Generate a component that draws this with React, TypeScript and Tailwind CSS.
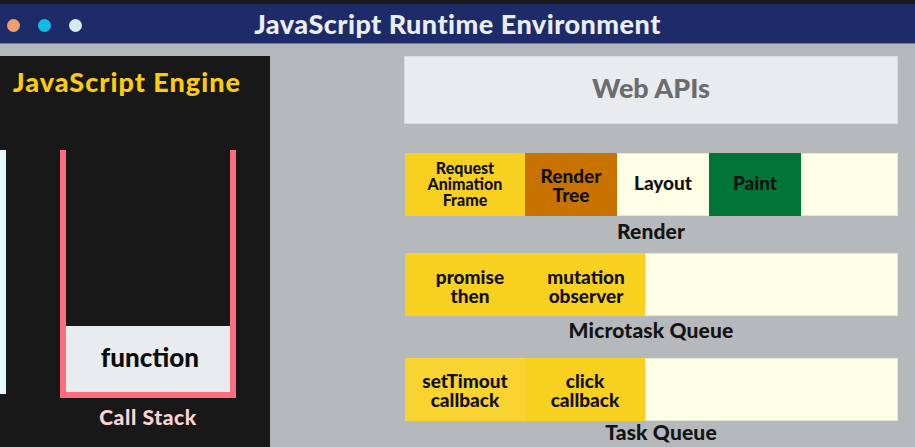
import React from 'react';

const font = "font-['Lato',sans-serif]";

const Cell = ({ lines, className, text = 'text-[19px] leading-[19px]' }: { lines: string[]; className: string; text?: string }) => (
  <div className={`flex flex-col items-center justify-center font-black text-[#111] ${text} ${className}`}>
    {lines.map((l) => (
      <span key={l}>{l}</span>
    ))}
  </div>
);

const Queue = ({ title, children, titleClass }: { title: string; children: React.ReactNode; titleClass: string }) => (
  <div className="flex flex-col">
    <div className="flex h-[63px] pl-[1px]">
      {children}
      <div className="flex-1 bg-[#ffffe6] border border-[#e4e6d6]" />
    </div>
    <div className={`text-center font-black text-[21px] tracking-[0.15px] leading-[24px] text-[#141414] ${titleClass}`}>{title}</div>
  </div>
);

export default function App() {
  return (
    <div className={`w-[915px] h-[447px] overflow-hidden bg-[#b6b9bc] ${font}`}>
      <div className="h-[4px] bg-[#1a1a1c]" />
      <header className="relative flex items-center justify-center h-[40px] bg-[#1e2b69] border-b border-[#6f7aa6]">
        <div className="absolute left-[7px] top-[15px] flex gap-[18px]">
          <span className="w-[13px] h-[13px] rounded-full bg-[#ee9f6d]" />
          <span className="w-[13px] h-[13px] rounded-full bg-[#14bce4]" />
          <span className="w-[13px] h-[13px] rounded-full bg-[#d6e9ec]" />
        </div>
        <h1 className="font-black text-[27px] leading-none text-[#eaeef2] tracking-[0.47px]">JavaScript Runtime Environment</h1>
      </header>

      <div className="flex items-start pt-[12px]">
        <aside className="w-[270px] h-[391px] shrink-0 bg-[#181818] flex flex-col">
          <div className="pl-[13px] pt-[10px] h-[94px] font-black text-[27px] leading-[32px] text-[#fbcd0c] tracking-[1px]">
            JavaScript Engine
          </div>
          <div className="flex items-start">
            <div className="w-[6px] h-[244px] bg-[#e3fbf8]" />
            <div className="ml-[54px] flex flex-col items-center">
              <div className="w-[176px] h-[248px] border-[6px] border-t-0 border-[#fc6d7e] flex flex-col justify-end">
                <div className="h-[66px] bg-[#e9ecee] flex items-center justify-center pl-[4px] pb-[4px] font-black text-[26px] text-[#0c0c0c]">
                  function
                </div>
              </div>
              <div className="mt-[7px] font-black text-[21px] tracking-[0.6px] leading-[24px] text-[#fbd3d6]">Call Stack</div>
            </div>
          </div>
        </aside>

        <main className="ml-[134px] w-[494px] flex flex-col">
          <div className="h-[68px] pb-[4px] bg-[#e9ecee] border border-[#d9dcde] flex items-center justify-center font-black text-[27px] text-[#6a6c6e]">
            Web APIs
          </div>

          <div className="mt-[29px]">
            <Queue title="Render" titleClass="mt-[3px]">
              <Cell lines={['Request', 'Animation', 'Frame']} className="w-[120px] pb-[1px] bg-[#f8d120]" text="text-[16px] leading-[16px]" />
              <Cell lines={['Render', 'Tree']} className="w-[92px] pt-[1px] bg-[#c87200]" />
              <Cell lines={['Layout']} className="w-[92px] pb-[4px] bg-[#ffffe6] border-y border-[#e4e6d6]" />
              <Cell lines={['Paint']} className="w-[92px] pb-[5px] bg-[#017437]" />
            </Queue>
          </div>

          <div className="mt-[10px]">
            <Queue title="Microtask Queue" titleClass="mt-[2px]">
              <Cell lines={['promise', 'then']} className="w-[130px] pt-[3px] bg-[#f8d120]" />
              <Cell lines={['mutation', 'observer']} className="w-[110px] pt-[3px] pr-[8px] bg-[#f8d120]" />
            </Queue>
          </div>

          <div className="mt-[16px]">
            <Queue title="Task Queue" titleClass="pl-[20px] -mt-[1px]">
              <Cell lines={['setTimout', 'callback']} className="w-[120px] bg-[#f9d430]" />
              <Cell lines={['click', 'callback']} className="w-[120px] bg-[#f8d120]" />
            </Queue>
          </div>
        </main>
      </div>
    </div>
  );
}
